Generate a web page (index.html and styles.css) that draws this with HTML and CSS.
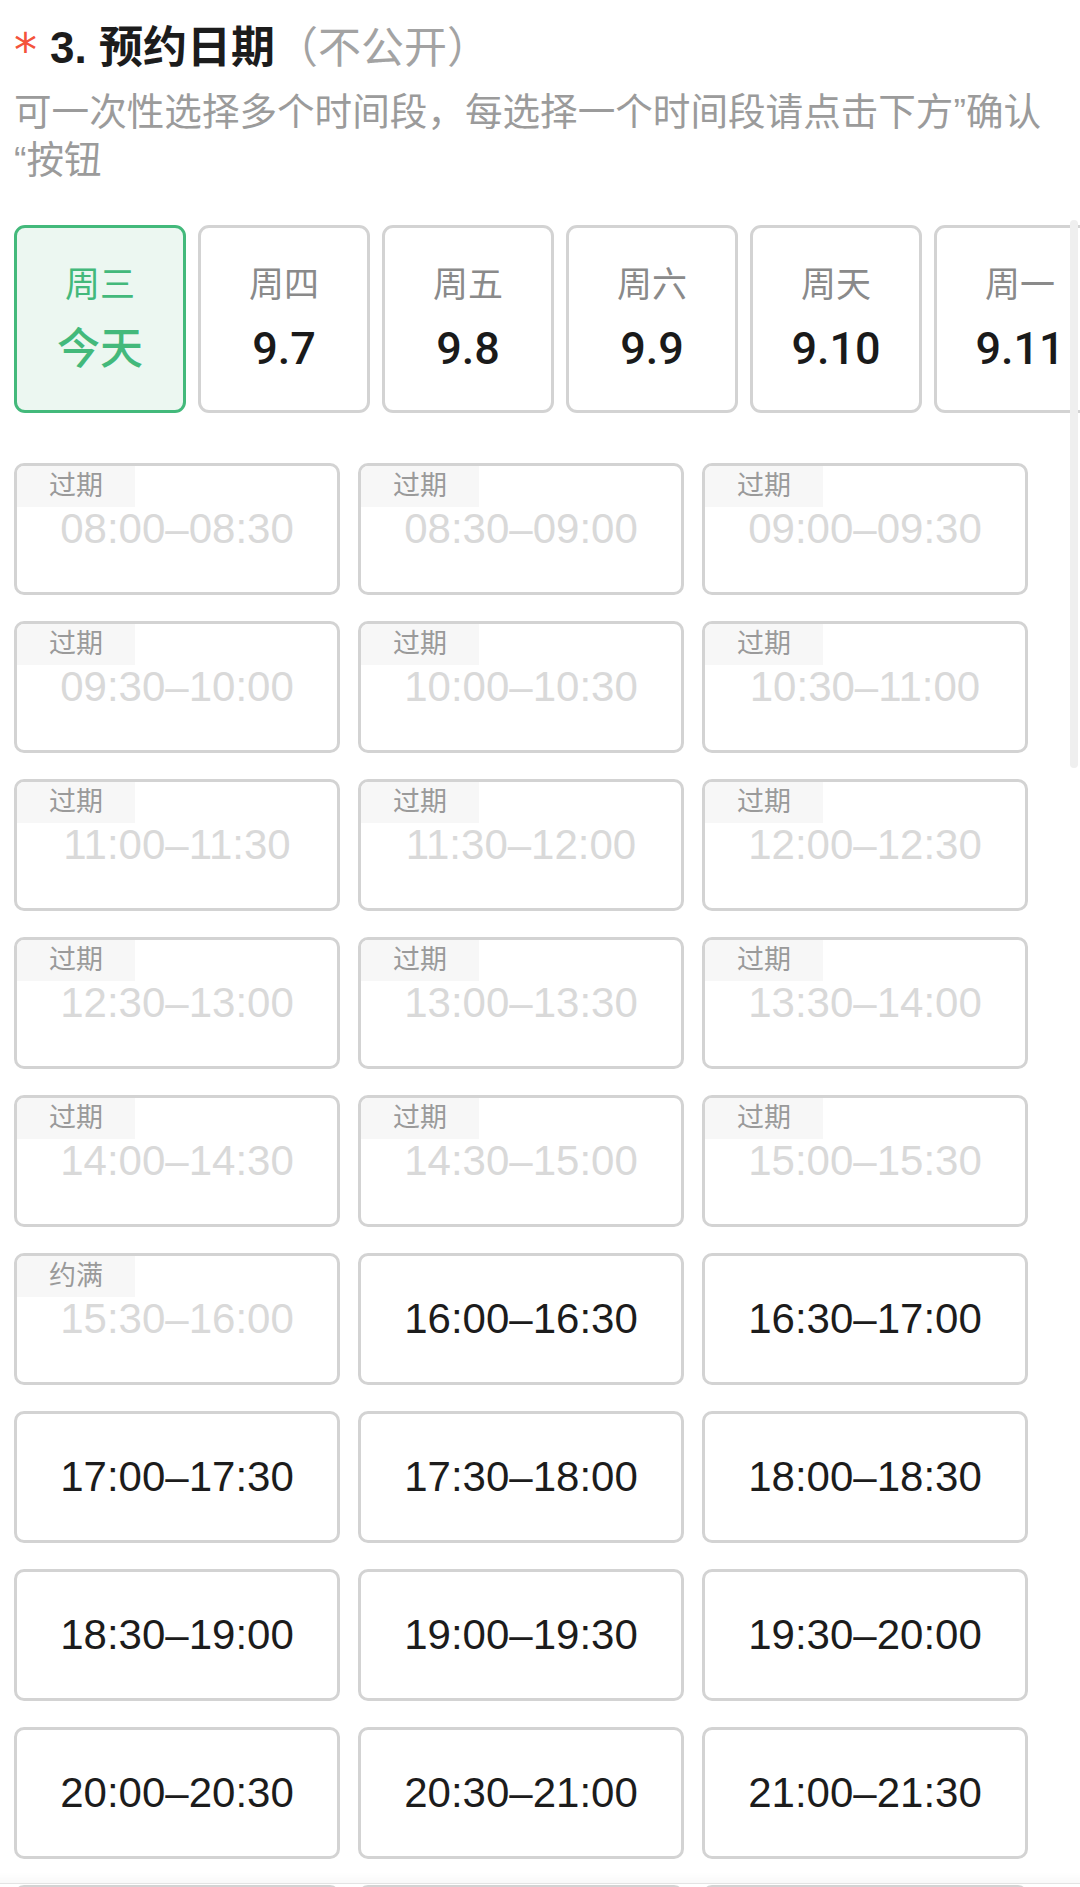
FILE: index.html
```html
<!DOCTYPE html>
<html lang="zh-CN">
<head>
<meta charset="utf-8">
<title>预约日期</title>
<link rel="stylesheet" href="styles.css">
</head>
<body>
<div class="page">
  <h2 class="title"><span class="req">*</span><span class="main">3. 预约日期</span><span class="note">（不公开）</span></h2>
  <p class="desc">可一次性选择多个时间段，每选择一个时间段请点击下方”确认“按钮</p>

  <div class="dates">
    <div class="date active"><span class="wk">周三</span><span class="day">今天</span></div>
    <div class="date"><span class="wk">周四</span><span class="day">9.7</span></div>
    <div class="date"><span class="wk">周五</span><span class="day">9.8</span></div>
    <div class="date"><span class="wk">周六</span><span class="day">9.9</span></div>
    <div class="date"><span class="wk">周天</span><span class="day">9.10</span></div>
    <div class="date"><span class="wk">周一</span><span class="day">9.11</span></div>
    <div class="date"><span class="wk">周二</span><span class="day">9.12</span></div>
  </div>

  <div class="slots">
    <div class="slot off"><span class="tag">过期</span>08:00–08:30</div>
    <div class="slot off"><span class="tag">过期</span>08:30–09:00</div>
    <div class="slot off"><span class="tag">过期</span>09:00–09:30</div>
    <div class="slot off"><span class="tag">过期</span>09:30–10:00</div>
    <div class="slot off"><span class="tag">过期</span>10:00–10:30</div>
    <div class="slot off"><span class="tag">过期</span>10:30–11:00</div>
    <div class="slot off"><span class="tag">过期</span>11:00–11:30</div>
    <div class="slot off"><span class="tag">过期</span>11:30–12:00</div>
    <div class="slot off"><span class="tag">过期</span>12:00–12:30</div>
    <div class="slot off"><span class="tag">过期</span>12:30–13:00</div>
    <div class="slot off"><span class="tag">过期</span>13:00–13:30</div>
    <div class="slot off"><span class="tag">过期</span>13:30–14:00</div>
    <div class="slot off"><span class="tag">过期</span>14:00–14:30</div>
    <div class="slot off"><span class="tag">过期</span>14:30–15:00</div>
    <div class="slot off"><span class="tag">过期</span>15:00–15:30</div>
    <div class="slot off"><span class="tag">约满</span>15:30–16:00</div>
    <div class="slot">16:00–16:30</div>
    <div class="slot">16:30–17:00</div>
    <div class="slot">17:00–17:30</div>
    <div class="slot">17:30–18:00</div>
    <div class="slot">18:00–18:30</div>
    <div class="slot">18:30–19:00</div>
    <div class="slot">19:00–19:30</div>
    <div class="slot">19:30–20:00</div>
    <div class="slot">20:00–20:30</div>
    <div class="slot">20:30–21:00</div>
    <div class="slot">21:00–21:30</div>
    <div class="slot">21:30–22:00</div>
    <div class="slot">22:00–22:30</div>
    <div class="slot">22:30–23:00</div>
  </div>
</div>
<div class="scroll-ind"></div>
<div class="bottom-fade"></div>
</body>
</html>
```

FILE: styles.css
```css
html, body {
  margin: 0;
  padding: 0;
  background: #ffffff;
}
body {
  font-family: "Liberation Sans", "Noto Sans CJK SC", sans-serif;
  color: #1a1a1a;
  overflow: hidden;
}
.page {
  padding: 20px 0 0 14px;
}
.title {
  margin: 0;
  display: flex;
  align-items: center;
  height: 56px;
  font-size: 44px;
  line-height: 56px;
  font-weight: normal;
}
.req {
  color: #f4523b;
  font-family: "DejaVu Sans", sans-serif;
  font-size: 46px;
  line-height: 56px;
  width: 36px;
  margin-top: 4px;
}
.main {
  font-weight: bold;
  color: #1c1c1c;
}
.note {
  color: #a3a3a3;
  font-size: 43px;
}
.desc {
  margin: 12px 0 0 0;
  padding-right: 18px;
  font-size: 37.6px;
  line-height: 48px;
  color: #9b9b9b;
}
.dates {
  margin-top: 41px;
  display: flex;
  gap: 12px;
  overflow: hidden;
}
.date {
  flex: 0 0 auto;
  box-sizing: border-box;
  width: 172px;
  height: 188px;
  border: 3px solid #d3d3d3;
  border-radius: 11px;
  background: #ffffff;
  display: flex;
  flex-direction: column;
  align-items: center;
  justify-content: center;
  gap: 10px;
}
.date .wk {
  font-size: 35px;
  line-height: 50px;
  color: #8a8a8a;
}
.date .day {
  font-family: Roboto, "Noto Sans CJK SC", sans-serif;
  font-size: 45px;
  line-height: 58px;
  font-weight: 500;
  color: #1a1a1a;
}
.date.active {
  border-color: #43b97b;
  background: #ecf7f1;
}
.date.active .wk {
  color: #43b97b;
}
.date.active .day {
  color: #43b97b;
  font-size: 43px;
}
.slots {
  margin-top: 50px;
  width: 1014px;
  display: grid;
  grid-template-columns: repeat(3, 1fr);
  column-gap: 18px;
  row-gap: 26px;
}
.slot {
  position: relative;
  box-sizing: border-box;
  height: 132px;
  border: 3px solid #d3d3d3;
  border-radius: 10px;
  display: flex;
  align-items: center;
  justify-content: center;
  font-size: 42px;
  color: #1c1c1c;
  background: #ffffff;
}
.slot.off {
  color: #d9d9d9;
}
.tag {
  position: absolute;
  top: 0;
  left: 0;
  width: 118px;
  height: 41px;
  line-height: 41px;
  text-align: center;
  font-size: 27px;
  color: #9a9a9a;
  background: #f7f7f7;
  border-top-left-radius: 7px;
}
.scroll-ind {
  position: fixed;
  left: 1070px;
  top: 220px;
  width: 8px;
  height: 548px;
  border-radius: 4px;
  background: #efefef;
}
.bottom-fade {
  position: fixed;
  left: 0;
  right: 0;
  bottom: 3px;
  height: 11px;
  background: linear-gradient(to bottom, rgba(0,0,0,0), rgba(0,0,0,0.025));
  border-bottom: 1px solid #e3e3e3;
}
```
